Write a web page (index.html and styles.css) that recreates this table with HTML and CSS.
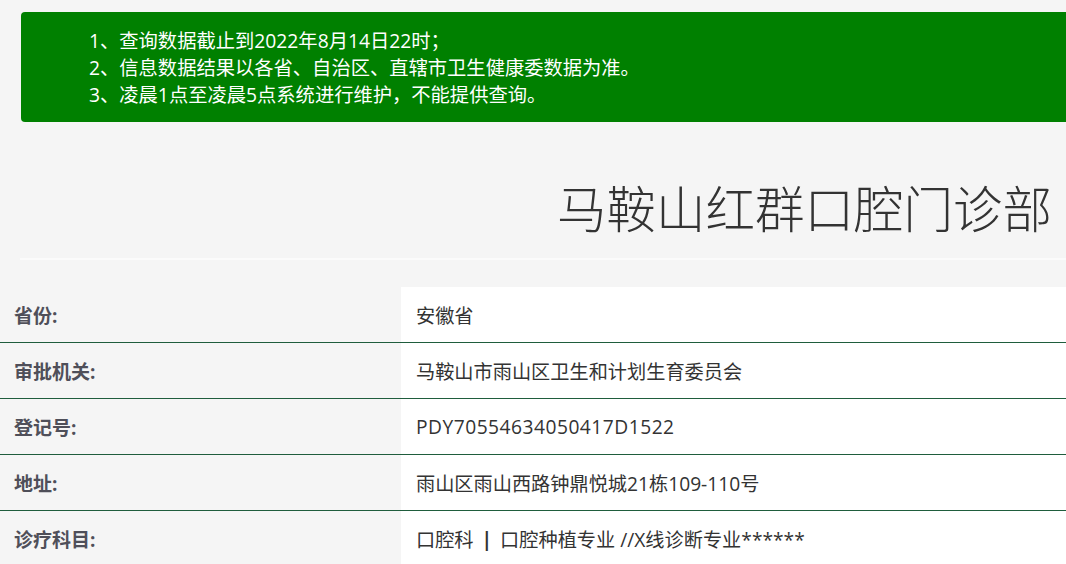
FILE: index.html
```html
<!DOCTYPE html>
<html lang="zh-CN">
<head>
<meta charset="utf-8">
<title>马鞍山红群口腔门诊部</title>
<link rel="stylesheet" href="styles.css">
</head>
<body>
<div class="notice">
  <p>1、查询数据截止到2022年8月14日22时；</p>
  <p>2、信息数据结果以各省、自治区、直辖市卫生健康委数据为准。</p>
  <p>3、凌晨1点至凌晨5点系统进行维护，不能提供查询。</p>
</div>
<h1 class="title">马鞍山红群口腔门诊部</h1>
<div class="divider"></div>
<div class="info">
  <div class="row"><div class="label">省份:</div><div class="value">安徽省</div></div>
  <div class="row"><div class="label">审批机关:</div><div class="value">马鞍山市雨山区卫生和计划生育委员会</div></div>
  <div class="row"><div class="label">登记号:</div><div class="value latin">PDY70554634050417D1522</div></div>
  <div class="row"><div class="label">地址:</div><div class="value">雨山区雨山西路钟鼎悦城21栋109-110号</div></div>
  <div class="row"><div class="label">诊疗科目:</div><div class="value">口腔科 <b class="sep">|</b> 口腔种植专业 //X线诊断专业******</div></div>
</div>
</body>
</html>
```

FILE: styles.css
```css
html, body {
  margin: 0;
  padding: 0;
  background: #f5f5f5;
  font-family: "Open Sans", "Noto Sans CJK SC", sans-serif;
  overflow: hidden;
}

.notice {
  margin: 12px 0 0 21px;
  height: 110px;
  box-sizing: border-box;
  padding: 15px 0 0 68px;
  background: #008000;
  border-radius: 4px 0 0 4px;
  color: #ffffff;
  font-size: 19.3px;
  line-height: 27px;
}

.notice p {
  margin: 0;
}

.title {
  margin: 55px 0 0 0;
  padding-right: 14px;
  text-align: right;
  font-family: "Noto Sans CJK SC", sans-serif;
  font-size: 49.5px;
  font-weight: 300;
  line-height: 60px;
  color: #333333;
}

.divider {
  margin: 21px 0 0 20px;
  height: 2px;
  background: #fbfbfb;
}

.info {
  margin-top: 27px;
}

.row {
  display: flex;
  height: 56px;
  box-sizing: border-box;
  border-bottom: 1px solid #1f5d3d;
}

.label {
  width: 401px;
  flex: none;
  box-sizing: border-box;
  padding-left: 14px;
  display: flex;
  align-items: center;
  font-size: 19px;
  font-weight: bold;
  color: #4f4f59;
}

.value {
  flex: 1;
  background: #ffffff;
  padding-left: 15px;
  display: flex;
  align-items: center;
  font-size: 19.2px;
  color: #333333;
  white-space: pre;
}

.latin {
  letter-spacing: 0.5px;
}

.sep {
  margin: 0 3px;
  font-weight: bold;
}
```
